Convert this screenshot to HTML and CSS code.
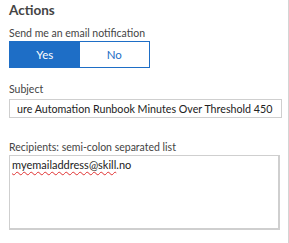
FILE: index.html
```html
<!DOCTYPE html>
<html>
<head>
  <title>Actions</title>
  <link rel="stylesheet" href="styles.css">
</head>
<body>
  <div class="panel">
    <h2 class="title">Actions</h2>
    <div class="form-group first">
      <label class="label">Send me an email notification</label>
      <div class="toggle">
        <button class="toggle-btn active">Yes</button>
        <button class="toggle-btn">No</button>
      </div>
    </div>
    <div class="form-group">
      <label class="label">Subject</label>
      <div class="input">ure Automation Runbook Minutes Over Threshold 450</div>
    </div>
    <div class="form-group last">
      <label class="label">Recipients: semi-colon separated list</label>
      <div class="textarea"><span class="misspelled">myemailaddress@skill</span>.no</div>
    </div>
  </div>
</body>
</html>
```

FILE: styles.css
```css
body {
  margin: 0;
  font-family: Lato, "Open Sans", sans-serif;
  color: #333;
  background: #fff;
}

.panel {
  width: 289px;
  height: 243px;
  box-sizing: border-box;
  border-right: 1px solid #d4d4d4;
  padding: 0 0 0 9px;
  overflow: hidden;
}

.title {
  margin: 0;
  font-size: 13.5px;
  font-weight: 700;
  color: #444;
  line-height: 20px;
}

.form-group {
  margin-top: 13px;
}

.form-group.first {
  margin-top: 5px;
}

.form-group.last {
  margin-top: 21px;
}

.label {
  display: block;
  font-size: 10.5px;
  color: #444;
  line-height: 16px;
  margin-bottom: 2px;
}

.first .label {
  margin-bottom: 0;
}

.last .label {
  margin-bottom: 0;
}

.toggle {
  display: flex;
  width: 141px;
  height: 27px;
  box-sizing: border-box;
  border: 1px solid #1e6ec6;
}

.toggle-btn {
  flex: 1;
  border: none;
  background: #fff;
  color: #1e6ec6;
  font-family: inherit;
  font-size: 11.5px;
  padding: 0;
}

.toggle-btn.active {
  background: #1e6ec6;
  color: #fff;
}

.input {
  width: 273px;
  height: 19px;
  box-sizing: border-box;
  border: 1px solid #cfcfcf;
  padding: 0 0 0 7px;
  font-size: 10.7px;
  line-height: 17px;
  color: #222;
  white-space: nowrap;
  overflow: hidden;
}

.textarea {
  width: 271px;
  height: 75px;
  box-sizing: border-box;
  border: 1px solid #cfcfcf;
  border-bottom-width: 2px;
  border-right-width: 2px;
  padding: 1px 2px;
  font-size: 11px;
  line-height: 16px;
  color: #222;
}

.misspelled {
  text-decoration: underline wavy #e03030;
  text-decoration-thickness: 1px;
  text-underline-offset: 2px;
}
```
